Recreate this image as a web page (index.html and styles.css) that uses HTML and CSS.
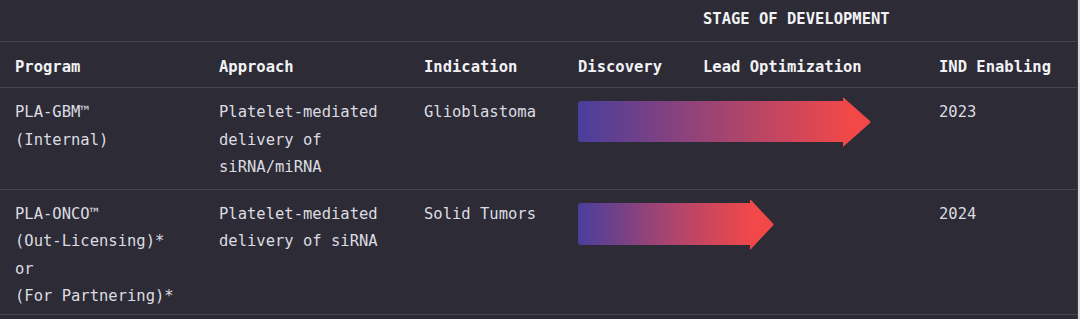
FILE: index.html
```html
<!DOCTYPE html>
<html lang="en">
<head>
<meta charset="utf-8">
<title>Pipeline</title>
<link rel="stylesheet" href="styles.css">
</head>
<body>
<div class="page">
  <div class="pipeline">
    <div class="row row-stage">
      <div class="cell span-3"></div>
      <div class="cell"></div>
      <div class="cell stage">STAGE OF DEVELOPMENT</div>
      <div class="cell"></div>
    </div>
    <div class="row row-head">
      <div class="cell">Program</div>
      <div class="cell">Approach</div>
      <div class="cell">Indication</div>
      <div class="cell">Discovery</div>
      <div class="cell">Lead Optimization</div>
      <div class="cell">IND Enabling</div>
    </div>
    <div class="row row-body">
      <div class="cell">PLA-GBM™<br>(Internal)</div>
      <div class="cell">Platelet-mediated<br>delivery of<br>siRNA/miRNA</div>
      <div class="cell">Glioblastoma</div>
      <div class="cell span-2">
        <svg class="arrow" width="293" height="50" viewBox="0 0 293 50">
          <defs>
            <linearGradient id="g1" x1="0" y1="0" x2="1" y2="0">
              <stop offset="0" stop-color="#4a3e9c"/>
              <stop offset="0.5" stop-color="#a4446f"/>
              <stop offset="0.93" stop-color="#f24848"/>
              <stop offset="1" stop-color="#f44848"/>
            </linearGradient>
          </defs>
          <path d="M3,4 H265 V1 Q265,0 266,1 L292,24 Q293,25 292,26 L266,49 Q265,50 265,49 V45 H3 Q0,45 0,42 V7 Q0,4 3,4 Z" fill="url(#g1)"/>
        </svg>
      </div>
      <div class="cell">2023</div>
    </div>
    <div class="row row-body last">
      <div class="cell">PLA-ONCO™<br>(Out-Licensing)*<br>or<br>(For Partnering)*</div>
      <div class="cell">Platelet-mediated<br>delivery of siRNA</div>
      <div class="cell">Solid Tumors</div>
      <div class="cell span-2">
        <svg class="arrow" width="196" height="51" viewBox="0 0 196 51">
          <defs>
            <linearGradient id="g2" x1="0" y1="0" x2="1" y2="0">
              <stop offset="0" stop-color="#4a3e9c"/>
              <stop offset="0.5" stop-color="#b0456b"/>
              <stop offset="0.9" stop-color="#f24848"/>
              <stop offset="1" stop-color="#f44848"/>
            </linearGradient>
          </defs>
          <path d="M3,4 H172 V1 Q172,0 173,1 L195,24.5 Q196,25.5 195,26.5 L173,50 Q172,51 172,50 V46 H3 Q0,46 0,43 V7 Q0,4 3,4 Z" fill="url(#g2)"/>
        </svg>
      </div>
      <div class="cell">2024</div>
    </div>
  </div>
  <div class="edge"></div>
</div>
</body>
</html>
```

FILE: styles.css
```css
* {
  box-sizing: border-box;
}

html, body {
  margin: 0;
  padding: 0;
  background: #2c2b36;
}

.page {
  display: flex;
  width: 1080px;
  height: 319px;
  overflow: hidden;
  background: #2c2b36;
}

.pipeline {
  flex: 1;
  font-family: "DejaVu Sans Mono", "Liberation Mono", monospace;
  font-size: 15.5px;
  line-height: 27.5px;
  color: #dcdce0;
}

.edge {
  width: 3px;
  background: #dadae2;
  border-left: 1px solid #3a3945;
}

.row {
  display: grid;
  grid-template-columns: 204px 205px 154px 125px 236px 1fr;
  border-bottom: 1px solid #45444f;
}

.cell {
  padding-left: 15px;
}

.span-3 {
  grid-column: span 3;
}

.span-2 {
  grid-column: span 2;
}

.row-stage {
  padding: 6px 0 7px;
}

.stage {
  font-weight: bold;
  color: #f2f2f4;
  white-space: nowrap;
}

.row-head {
  padding: 12px 0 6px;
  font-weight: bold;
  color: #f2f2f4;
}

.row-body {
  padding: 11px 0 7px;
}

.row-body.last {
  padding-bottom: 3px;
}

.arrow {
  display: block;
  margin-top: -2px;
}
```
